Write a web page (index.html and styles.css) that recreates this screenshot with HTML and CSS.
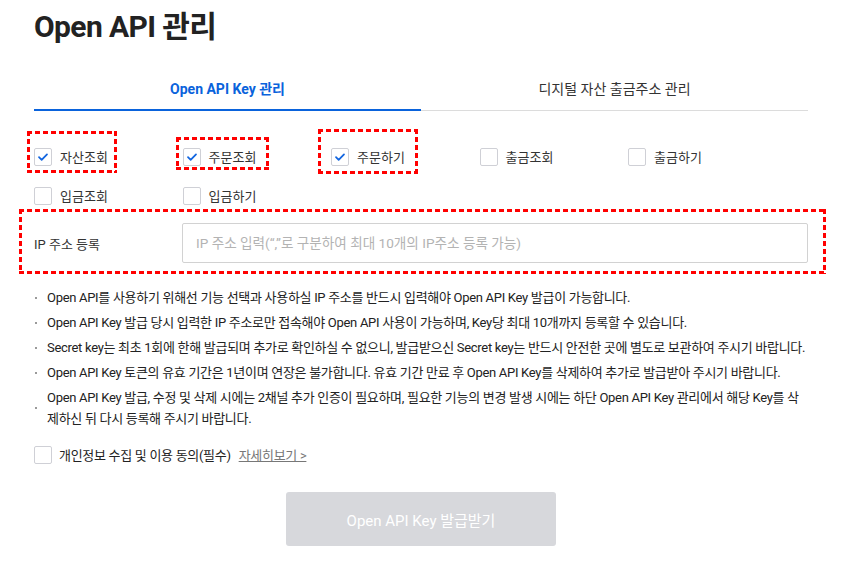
FILE: index.html
```html
<!DOCTYPE html>
<html lang="ko">
<head>
<meta charset="utf-8">
<title>Open API 관리</title>
<link rel="stylesheet" href="styles.css">
</head>
<body>
<div class="page">
  <h1 class="title">Open API 관리</h1>

  <div class="tabs">
    <div class="tab active">Open API Key 관리</div>
    <div class="tab">디지털 자산 출금주소 관리</div>
  </div>

  <div class="perm-grid">
    <label class="check"><span class="box on"><svg viewBox="0 0 18 18"><path d="M4.5 9.2l3 3 6-6.2"/></svg></span><span>자산조회</span></label>
    <label class="check"><span class="box on"><svg viewBox="0 0 18 18"><path d="M4.5 9.2l3 3 6-6.2"/></svg></span><span>주문조회</span></label>
    <label class="check"><span class="box on"><svg viewBox="0 0 18 18"><path d="M4.5 9.2l3 3 6-6.2"/></svg></span><span>주문하기</span></label>
    <label class="check"><span class="box"></span><span>출금조회</span></label>
    <label class="check"><span class="box"></span><span>출금하기</span></label>
    <label class="check"><span class="box"></span><span>입금조회</span></label>
    <label class="check"><span class="box"></span><span>입금하기</span></label>
  </div>

  <div class="ip-row">
    <span class="ip-label">IP 주소 등록</span>
    <input class="ip-input" type="text" placeholder="IP 주소 입력(“,”로 구분하여 최대 10개의 IP주소 등록 가능)">
  </div>

  <ul class="notes">
    <li><span>Open API를 사용하기 위해선 기능 선택과 사용하실 IP 주소를 반드시 입력해야 Open API Key 발급이 가능합니다.</span></li>
    <li><span>Open API Key 발급 당시 입력한 IP 주소로만 접속해야 Open API 사용이 가능하며, Key당 최대 10개까지 등록할 수 있습니다.</span></li>
    <li><span>Secret key는 최초 1회에 한해 발급되며 추가로 확인하실 수 없으니, 발급받으신 Secret key는 반드시 안전한 곳에 별도로 보관하여 주시기 바랍니다.</span></li>
    <li><span>Open API Key 토큰의 유효 기간은 1년이며 연장은 불가합니다. 유효 기간 만료 후 Open API Key를 삭제하여 추가로 발급받아 주시기 바랍니다.</span></li>
    <li><span>Open API Key 발급, 수정 및 삭제 시에는 2채널 추가 인증이 필요하며, 필요한 기능의 변경 발생 시에는 하단 Open API Key 관리에서 해당 Key를 삭<br>제하신 뒤 다시 등록해 주시기 바랍니다.</span></li>
  </ul>

  <div class="consent">
    <span class="box"></span>
    <span class="consent-text">개인정보 수집 및 이용 동의(필수)</span>
    <a class="more" href="#">자세히보기 &gt;</a>
  </div>

  <div class="actions">
    <button class="issue-btn" type="button" disabled>Open API Key 발급받기</button>
  </div>

  <div class="mark mark-1"></div>
  <div class="mark mark-2"></div>
  <div class="mark mark-3"></div>
  <div class="mark mark-ip"></div>
</div>
</body>
</html>
```

FILE: styles.css
```css
* { box-sizing: border-box; }

html, body {
  margin: 0;
  padding: 0;
  background: #fff;
}

body {
  font-family: Roboto, "Noto Sans CJK KR", sans-serif;
  color: #222;
  font-size: 13px;
}

.page {
  position: relative;
  width: 774px;
  margin-left: 34px;
  padding-top: 9px;
}

.title {
  margin: 0;
  font-size: 30px;
  line-height: 36px;
  font-weight: 700;
  color: #222;
  letter-spacing: -0.6px;
}

.tabs {
  display: flex;
  margin-top: 24px;
  border-bottom: 1px solid #dcdcdc;
}

.tab {
  flex: 1;
  height: 40px;
  line-height: 40px;
  text-align: center;
  font-size: 14px;
  color: #333;
}

.tab.active {
  height: 42px;
  margin-bottom: -1px;
  border-bottom: 2px solid #0a63dc;
  color: #0a63dc;
  font-weight: 700;
}

.perm-grid {
  display: grid;
  grid-template-columns: repeat(5, 148.5px);
  grid-auto-rows: 39px;
  margin-top: 26px;
}

.check {
  display: flex;
  align-items: center;
  gap: 8px;
  font-size: 13px;
  color: #333;
}

.box {
  width: 18px;
  height: 18px;
  flex: none;
  border: 1px solid #cfd0d6;
  border-radius: 2px;
  background: #fff;
  display: inline-flex;
  align-items: center;
  justify-content: center;
}

.box svg {
  width: 18px;
  height: 18px;
  fill: none;
  stroke: #1366e0;
  stroke-width: 2;
  stroke-linecap: round;
  stroke-linejoin: round;
}

.ip-row {
  display: flex;
  align-items: center;
  margin-top: 8px;
}

.ip-label {
  width: 148px;
  font-size: 13px;
  color: #333;
}

.ip-input {
  flex: 1;
  height: 40px;
  border: 1px solid #d2d2d2;
  border-radius: 2px;
  padding: 0 13px;
  font-family: Roboto, "Noto Sans CJK KR", sans-serif;
  font-size: 13.6px;
  color: #333;
  outline: none;
}

.ip-input::placeholder {
  color: #b3b3b3;
}

.notes {
  list-style: none;
  margin: 24px 0 0;
  padding: 0;
}

.notes li {
  display: flex;
  align-items: center;
  margin-bottom: 4px;
  font-size: 13px;
  line-height: 21px;
  letter-spacing: -0.3px;
  color: #222;
}

.notes li::before {
  content: "";
  flex: none;
  width: 2px;
  height: 2px;
  margin: 0 10px 0 1px;
  background: #9a9a9a;
}

.consent {
  display: flex;
  align-items: center;
  margin-top: 16px;
  font-size: 13px;
  letter-spacing: -0.3px;
}

.consent .box {
  margin-right: 7px;
}

.consent-text {
  color: #222;
}

.more {
  margin-left: 8px;
  color: #777;
  text-decoration: underline;
}

.actions {
  display: flex;
  justify-content: center;
  margin-top: 28px;
}

.issue-btn {
  width: 270px;
  height: 54px;
  border: none;
  border-radius: 3px;
  background: #d7d8dc;
  color: #fff;
  font-family: Roboto, "Noto Sans CJK KR", sans-serif;
  font-size: 15px;
}

.mark {
  position: absolute;
  pointer-events: none;
  background:
    repeating-linear-gradient(90deg, #ff0000 0 5px, transparent 5px 8px) left top / 100% 3px no-repeat,
    repeating-linear-gradient(90deg, #ff0000 0 5px, transparent 5px 8px) left bottom / 100% 3px no-repeat,
    repeating-linear-gradient(180deg, #ff0000 0 5px, transparent 5px 8px) left top / 3px 100% no-repeat,
    repeating-linear-gradient(180deg, #ff0000 0 5px, transparent 5px 8px) right top / 3px 100% no-repeat;
}

.mark-1 { left: -7px; top: 131px; width: 90px; height: 42px; }
.mark-2 { left: 142px; top: 137px; width: 93px; height: 33px; }
.mark-3 { left: 284px; top: 129px; width: 100px; height: 45px; }
.mark-ip { left: -15px; top: 209px; width: 807px; height: 65px; }
```
